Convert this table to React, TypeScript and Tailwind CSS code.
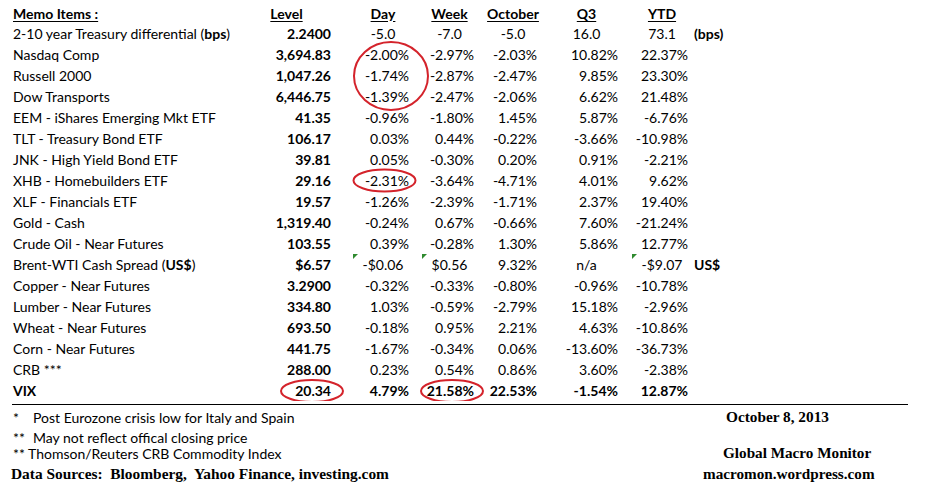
type Align = "r" | "c";
type Cell = { v: string; a?: Align; tri?: boolean };
type Row = { label: React.ReactNode; level: string; cells: Cell[]; extra?: string; bold?: boolean };

// per column: width, centered padding, error-triangle offset
const COLS = [
  { w: "w-[78px]", c: "text-center pl-[18px]", tri: "left-[18px]" },
  { w: "w-[65px]", c: "text-center pl-[8px]", tri: "left-[9px]" },
  { w: "w-[63px]", c: "text-center pl-[7px]", tri: "left-[7px]" },
  { w: "w-[81px]", c: "text-center pl-[10px]", tri: "left-[10px]" },
  { w: "w-[70px]", c: "text-center pl-[10px]", tri: "left-[10px]" },
];

const r = (...vals: string[]): Cell[] => vals.map((v) => ({ v, a: "r" }));

const ROWS: Row[] = [
  {
    label: (
      <>
        2-10 year Treasury differential (<b>bps</b>)
      </>
    ),
    level: "2.2400",
    cells: ["-5.0", "-7.0", "-5.0", "16.0", "73.1"].map((v) => ({ v, a: "c" as Align })),
    extra: "(bps)",
  },
  { label: "Nasdaq Comp", level: "3,694.83", cells: r("-2.00%", "-2.97%", "-2.03%", "10.82%", "22.37%") },
  { label: "Russell 2000", level: "1,047.26", cells: r("-1.74%", "-2.87%", "-2.47%", "9.85%", "23.30%") },
  { label: "Dow Transports", level: "6,446.75", cells: r("-1.39%", "-2.47%", "-2.06%", "6.62%", "21.48%") },
  { label: "EEM - iShares Emerging Mkt ETF", level: "41.35", cells: r("-0.96%", "-1.80%", "1.45%", "5.87%", "-6.76%") },
  { label: "TLT - Treasury Bond ETF", level: "106.17", cells: r("0.03%", "0.44%", "-0.22%", "-3.66%", "-10.98%") },
  { label: "JNK - High Yield Bond ETF", level: "39.81", cells: r("0.05%", "-0.30%", "0.20%", "0.91%", "-2.21%") },
  { label: "XHB - Homebuilders ETF", level: "29.16", cells: r("-2.31%", "-3.64%", "-4.71%", "4.01%", "9.62%") },
  { label: "XLF - Financials ETF", level: "19.57", cells: r("-1.26%", "-2.39%", "-1.71%", "2.37%", "19.40%") },
  { label: "Gold - Cash", level: "1,319.40", cells: r("-0.24%", "0.67%", "-0.66%", "7.60%", "-21.24%") },
  { label: "Crude Oil - Near Futures", level: "103.55", cells: r("0.39%", "-0.28%", "1.30%", "5.86%", "12.77%") },
  {
    label: (
      <>
        Brent-WTI Cash Spread (<b>US$</b>)
      </>
    ),
    level: "$6.57",
    cells: [
      { v: "-$0.06", a: "c", tri: true },
      { v: "$0.56", a: "c", tri: true },
      { v: "9.32%", a: "r" },
      { v: "n/a", a: "c" },
      { v: "-$9.07", a: "c", tri: true },
    ],
    extra: "US$",
  },
  { label: "Copper - Near Futures", level: "3.2900", cells: r("-0.32%", "-0.33%", "-0.80%", "-0.96%", "-10.78%") },
  { label: "Lumber - Near Futures", level: "334.80", cells: r("1.03%", "-0.59%", "-2.79%", "15.18%", "-2.96%") },
  { label: "Wheat - Near Futures", level: "693.50", cells: r("-0.18%", "0.95%", "2.21%", "4.63%", "-10.86%") },
  { label: "Corn - Near Futures", level: "441.75", cells: r("-1.67%", "-0.34%", "0.06%", "-13.60%", "-36.73%") },
  { label: "CRB ***", level: "288.00", cells: r("0.23%", "0.54%", "0.86%", "3.60%", "-2.38%") },
  { label: "VIX", level: "20.34", cells: r("4.79%", "21.58%", "22.53%", "-1.54%", "12.87%"), bold: true },
];

const HEADERS = ["Day", "Week", "October", "Q3", "YTD"];

function TableRow({ row }: { row: Row }) {
  return (
    <div className={`flex h-[21px] items-center ${row.bold ? "font-bold" : ""}`}>
      <div className="w-[238px] shrink-0 whitespace-nowrap pl-[13px]">{row.label}</div>
      <div className="w-[97px] shrink-0 pr-[4px] text-right font-bold">{row.level}</div>
      {row.cells.map((cell, i) => (
        <div
          key={i}
          className={`relative h-full shrink-0 whitespace-nowrap leading-[21px] ${COLS[i].w} ${
            cell.a === "c" ? COLS[i].c : "pr-[4px] text-right"
          }`}
        >
          {cell.tri && (
            <span
              className={`absolute top-0 h-0 w-0 border-t-[5px] border-r-[5px] border-t-[#2f8a2f] border-r-transparent ${COLS[i].tri}`}
            />
          )}
          {cell.v}
        </div>
      ))}
      {row.extra && <div className="pl-[2px] font-bold">{row.extra}</div>}
    </div>
  );
}

export default function App() {
  return (
    <div className="h-[503px] w-[936px] overflow-hidden bg-white font-[Lato,sans-serif] text-[14px] text-black">
      <div className="relative pt-[3px]">
        <div className="flex h-[20px] items-center font-bold underline underline-offset-2">
          <div className="w-[238px] shrink-0 pl-[13px]">Memo Items :</div>
          <div className="w-[97px] shrink-0 text-center">Level</div>
          {HEADERS.map((h, i) => (
            <div key={h} className={`shrink-0 ${COLS[i].w} ${COLS[i].c}`}>
              {h}
            </div>
          ))}
        </div>
        {ROWS.map((row, i) => (
          <TableRow key={i} row={row} />
        ))}

        {/* hand-drawn red circles over the table */}
        <svg className="pointer-events-none absolute inset-0 h-full w-full" fill="none" stroke="#d4232b" strokeWidth="2">
          <ellipse cx="391" cy="76" rx="37" ry="34" />
          <ellipse cx="384.5" cy="180.5" rx="31" ry="11" />
          <ellipse cx="312" cy="391" rx="31" ry="11" />
          <ellipse cx="452" cy="391" rx="31" ry="11" />
        </svg>
      </div>

      <div className="ml-[12px] mt-[3px] w-[896px] border-t border-black" />

      <div className="mt-[2px] grid grid-cols-[703px_1fr]">
        <div className="flex h-[20px] items-center pl-[13px]">
          <span className="w-[20px]">*</span>Post Eurozone crisis low for Italy and Spain
        </div>
        <div className="flex h-[20px] items-center pl-[23px] font-['Liberation_Serif',serif] text-[15.3px] font-bold">
          October 8, 2013
        </div>
        <div className="flex h-[20px] items-center pl-[13px]">
          <span className="w-[20px]">**</span>May not reflect offical closing price
        </div>
        <div />
        <div className="flex h-[12px] items-center pl-[13px]">** Thomson/Reuters CRB Commodity Index</div>
        <div className="flex h-[12px] items-center pl-[20px] font-['Liberation_Serif',serif] text-[15.2px] font-bold">
          Global Macro Monitor
        </div>
        <div className="mt-[5px] flex h-[20px] items-center whitespace-pre pl-[11px] font-['Liberation_Serif',serif] text-[15.4px] font-bold">
          {"Data Sources:  Bloomberg,  Yahoo Finance, investing.com"}
        </div>
        <div className="mt-[5px] flex h-[20px] items-center font-['Liberation_Serif',serif] text-[15.2px] font-bold">
          macromon.wordpress.com
        </div>
      </div>
    </div>
  );
}
